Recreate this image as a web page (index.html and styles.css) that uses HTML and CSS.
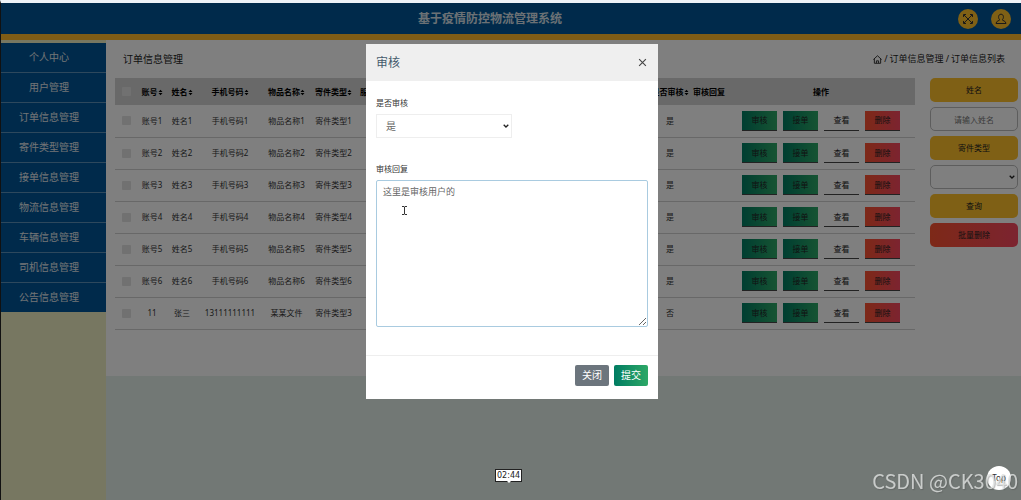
FILE: index.html
```html
<!DOCTYPE html>
<html lang="zh-CN">
<head>
<meta charset="utf-8">
<title>基于疫情防控物流管理系统</title>
<link rel="stylesheet" href="styles.css">
</head>
<body>
<svg class="defs" aria-hidden="true">
  <symbol id="sort" viewBox="0 0 6 8"><path d="M3 0.6 5.4 3.4H0.6zM3 7.4 0.6 4.6H5.4z" fill="currentColor"/></symbol>
</svg>
<header class="topbar">
  <h1 class="topbar-title">基于疫情防控物流管理系统</h1>
  <div class="topbar-actions">
    <button class="round" type="button" aria-label="全屏">
      <svg width="12" height="12" viewBox="0 0 12 12" fill="none" stroke="currentColor"><path d="M2 2l8 8M10 2l-8 8M1.500 4V1.500H4M8 1.500h2.500V4M10.500 8v2.500H8M4 10.500H1.500V8"/></svg>
    </button>
    <button class="round" type="button" aria-label="用户">
      <svg width="12" height="12" viewBox="0 0 12 12" fill="none" stroke="currentColor"><path d="M4.800 6.800C3 5.500 3 1.200 6 1.200s3 4.300 1.200 5.600c0 .9 3.600.8 3.800 3.700H1c.2-2.900 3.800-2.800 3.800-3.700z"/></svg>
    </button>
  </div>
</header>
<div class="layout">
  <nav class="sidebar">
    <ul class="menu">
      <li><a href="#">个人中心</a></li>
      <li><a href="#">用户管理</a></li>
      <li><a href="#">订单信息管理</a></li>
      <li><a href="#">寄件类型管理</a></li>
      <li><a href="#">接单信息管理</a></li>
      <li><a href="#">物流信息管理</a></li>
      <li><a href="#">车辆信息管理</a></li>
      <li><a href="#">司机信息管理</a></li>
      <li><a href="#">公告信息管理</a></li>
    </ul>
  </nav>
  <main class="content">
    <div class="page-head">
      <h2 class="page-title">订单信息管理</h2>
      <div class="crumbs">
        <svg width="9" height="9" viewBox="0 0 10 10" fill="none" stroke="currentColor"><path d="M.5 5 5 .8 9.500 5M1.500 4.200v5h7v-5M3.800 9V6.500h2.400V9"/></svg>
        <span>/</span><a href="#">订单信息管理</a><span>/</span><span>订单信息列表</span>
      </div>
    </div>
    <div class="columns">
      <table class="orders">
        <colgroup><col class="c-check"><col class="c-short"><col class="c-short"><col class="c-phone"><col class="c-name"><col class="c-name"><col><col class="c-state"><col class="c-reply"><col class="c-ops"></colgroup>
        <thead><tr>
          <th><input type="checkbox" aria-label="全选"></th>
          <th>账号<svg class="sort"><use href="#sort"/></svg></th>
          <th>姓名<svg class="sort"><use href="#sort"/></svg></th>
          <th>手机号码<svg class="sort"><use href="#sort"/></svg></th>
          <th>物品名称<svg class="sort"><use href="#sort"/></svg></th>
          <th>寄件类型<svg class="sort"><use href="#sort"/></svg></th>
          <th class="start">服务</th>
          <th>是否审核<svg class="sort"><use href="#sort"/></svg></th>
          <th>审核回复</th>
          <th>操作</th>
        </tr></thead>
        <tbody>
          <tr><td><input type="checkbox" aria-label="选择账号1"></td><td>账号1</td><td>姓名1</td><td>手机号码1</td><td>物品名称1</td><td>寄件类型1</td><td></td><td>是</td><td></td><td><div class="ops"><button class="op green">审核</button><button class="op green">接单</button><button class="op">查看</button><button class="op red">删除</button></div></td></tr>
          <tr><td><input type="checkbox" aria-label="选择账号2"></td><td>账号2</td><td>姓名2</td><td>手机号码2</td><td>物品名称2</td><td>寄件类型2</td><td></td><td>是</td><td></td><td><div class="ops"><button class="op green">审核</button><button class="op green">接单</button><button class="op">查看</button><button class="op red">删除</button></div></td></tr>
          <tr><td><input type="checkbox" aria-label="选择账号3"></td><td>账号3</td><td>姓名3</td><td>手机号码3</td><td>物品名称3</td><td>寄件类型3</td><td></td><td>是</td><td></td><td><div class="ops"><button class="op green">审核</button><button class="op green">接单</button><button class="op">查看</button><button class="op red">删除</button></div></td></tr>
          <tr><td><input type="checkbox" aria-label="选择账号4"></td><td>账号4</td><td>姓名4</td><td>手机号码4</td><td>物品名称4</td><td>寄件类型4</td><td></td><td>是</td><td></td><td><div class="ops"><button class="op green">审核</button><button class="op green">接单</button><button class="op">查看</button><button class="op red">删除</button></div></td></tr>
          <tr><td><input type="checkbox" aria-label="选择账号5"></td><td>账号5</td><td>姓名5</td><td>手机号码5</td><td>物品名称5</td><td>寄件类型5</td><td></td><td>是</td><td></td><td><div class="ops"><button class="op green">审核</button><button class="op green">接单</button><button class="op">查看</button><button class="op red">删除</button></div></td></tr>
          <tr><td><input type="checkbox" aria-label="选择账号6"></td><td>账号6</td><td>姓名6</td><td>手机号码6</td><td>物品名称6</td><td>寄件类型6</td><td></td><td>是</td><td></td><td><div class="ops"><button class="op green">审核</button><button class="op green">接单</button><button class="op">查看</button><button class="op red">删除</button></div></td></tr>
          <tr><td><input type="checkbox" aria-label="选择11"></td><td>11</td><td>张三</td><td>13111111111</td><td>某某文件</td><td>寄件类型3</td><td></td><td>否</td><td></td><td><div class="ops"><button class="op green">审核</button><button class="op green">接单</button><button class="op">查看</button><button class="op red">删除</button></div></td></tr>
        </tbody>
      </table>
      <form class="filters">
        <label class="pill" for="name">姓名</label>
        <input class="field" id="name" type="text" placeholder="请输入姓名">
        <label class="pill" for="type">寄件类型</label>
        <select class="field" id="type"><option></option></select>
        <button class="pill" type="button">查询</button>
        <button class="pill red" type="button">批量删除</button>
      </form>
    </div>
  </main>
</div>
<button class="to-top" type="button">Top</button>
<div class="backdrop">
  <section class="modal" role="dialog" aria-labelledby="dlg-title">
    <header class="modal-head">
      <h2 class="modal-title" id="dlg-title">审核</h2>
      <button class="close" type="button" aria-label="关闭">
        <svg width="9" height="9" viewBox="0 0 8 8" fill="none" stroke="currentColor"><path d="M1 1l6 6M7 1 1 7"/></svg>
      </button>
    </header>
    <div class="modal-body">
      <label for="passed">是否审核</label>
      <select class="passed" id="passed"><option>是</option></select>
      <label for="reply">审核回复</label>
      <textarea class="reply" id="reply">这里是审核用户的</textarea>
      <svg class="cursor" width="7" height="9" viewBox="0 0 7 9" fill="none" stroke="#333"><path d="M1 .5h2l.5.5.5-.5h2M3.500 1v7M1 8.500h2l.5-.5.5.5h2"/></svg>
    </div>
    <footer class="modal-foot">
      <button class="btn gray" type="button">关闭</button>
      <button class="btn green" type="button">提交</button>
    </footer>
  </section>
</div>
<div class="timestamp">02:44</div>
<div class="watermark">CSDN @CK3040</div>
</body>
</html>
```
FILE: styles.css
```css
* { box-sizing: border-box; }

body {
  margin: 0;
  min-height: 100vh;
  display: flex;
  flex-direction: column;
  border-top: 3px solid #eef3f8;
  border-left: 1px solid #222;
  background: #e4f0ea;
  color: #333;
  font: 8px/12px "Noto Sans", "Noto Sans CJK SC", sans-serif;
}

h1, h2, ul { margin: 0; padding: 0; }
ul { list-style: none; }
a { color: inherit; text-decoration: none; }
button, input, select, textarea { font: inherit; color: inherit; margin: 0; }
button { border: 0; padding: 0; }
.defs { display: none; }

.green { background: linear-gradient(90deg, #007c62, #2da866); }
.red { background: linear-gradient(90deg, #fb5230, #f84860); }
.gray { background: #6c757d; }

.topbar {
  display: grid;
  grid-template-columns: 1fr auto 1fr;
  align-items: center;
  height: 37px;
  padding-right: 10px;
  border-bottom: 6px solid #ffb92a;
  background: #005596;
}
.topbar-title {
  grid-column: 2;
  margin-right: 32px;
  color: #d8e2ea;
  font-size: 12px;
  line-height: 18px;
}
.topbar-actions { display: flex; justify-content: flex-end; gap: 13px; }
.round {
  display: flex;
  align-items: center;
  justify-content: center;
  width: 20px;
  height: 20px;
  border-radius: 50%;
  background: #ffc02a;
}

.layout { flex: 1; display: flex; align-items: stretch; }
.sidebar { width: 105px; padding-top: 3px; background: #eeefc2; }
.menu { background: #005596; }
.menu a {
  display: block;
  height: 30px;
  padding-right: 9px;
  border-bottom: 1px solid #5a90bb;
  color: #e4e8ec;
  font-size: 10px;
  line-height: 29px;
  text-align: center;
}
.menu li:last-child a { height: 29px; border-bottom: 0; }

.content {
  flex: 1;
  align-self: flex-start;
  padding: 0 3px 46px 9px;
  background: #fff;
}
.page-head {
  display: flex;
  align-items: center;
  justify-content: space-between;
  height: 38px;
  padding: 0 13px 0 8px;
}
.page-title { font-size: 10px; font-weight: 400; line-height: 16px; color: #222; }
.crumbs { display: flex; align-items: center; gap: 2px; font-size: 9px; color: #222; }
.columns { display: flex; align-items: flex-start; gap: 15px; }

.orders { flex: 1; width: 0; table-layout: fixed; border-collapse: collapse; }
.c-check { width: 22px; }
.c-short { width: 30px; }
.c-phone { width: 66px; }
.c-name { width: 47px; }
.c-state { width: 42px; }
.c-reply { width: 36px; }
.c-ops { width: 188px; }
.orders th, .orders td { padding: 0; text-align: center; white-space: nowrap; }
.orders th { height: 27px; background: #d2d2d2; color: #000; }
.orders th.start { padding-left: 3px; text-align: left; }
.orders td { height: 32px; border-bottom: 1px solid #d0d0d0; }
.orders input {
  display: block;
  appearance: none;
  width: 9px;
  height: 9px;
  margin-left: 7px;
  border-radius: 1px;
  background: #e2e2e2;
}
.sort { width: 5px; height: 7px; vertical-align: -1px; }
.ops { display: flex; justify-content: center; gap: 6px; }
.op {
  width: 35px;
  height: 20px;
  border-bottom: 1px solid #444;
  color: #222;
}
.op:not(.green):not(.red) { background: #fff; }

.filters { display: flex; flex-direction: column; gap: 5px; width: 88px; }
.pill, .field { width: 100%; height: 24px; border-radius: 5px; text-align: center; }
.pill { background-color: #ffc02a; color: #222; line-height: 24px; }
.pill.red { background: linear-gradient(90deg, #fb5230, #f84860); }
.field { border: 1px solid #bbb; background: #fff; }
.field::placeholder { color: #777; }
select.field, .passed {
  appearance: none;
  background: #fff url("data:image/svg+xml,%3Csvg xmlns='http://www.w3.org/2000/svg' width='6' height='4' fill='none' stroke='%23222' stroke-width='1.3'%3E%3Cpath d='M.7.7 3 3 5.300.7'/%3E%3C/svg%3E") no-repeat right 2px center;
}

.to-top {
  position: fixed;
  right: 10px;
  bottom: 10px;
  z-index: 3;
  width: 24px;
  height: 24px;
  border-radius: 50%;
  background: #fff;
}

.backdrop {
  position: fixed;
  inset: 3px 0 0 3px;
  z-index: 2;
  display: flex;
  align-items: flex-start;
  justify-content: center;
  padding-top: 41px;
  box-shadow: -3px 0 0 rgba(0, 0, 0, .5);
  background: rgba(0, 0, 0, .5);
}
.modal { width: 292px; background: #fff; }
.modal-head {
  display: flex;
  align-items: center;
  justify-content: space-between;
  height: 37px;
  padding: 0 11px 0 10px;
  background: #efefef;
}
.modal-title { color: #455a6c; font-size: 12px; font-weight: 400; line-height: 18px; }
.close { display: flex; background: none; color: #444; }
.modal-body {
  position: relative;
  display: flex;
  flex-direction: column;
  align-items: flex-start;
  padding: 16px 10px 28px;
}
.passed {
  width: 136px;
  height: 24px;
  margin: 5px 0 25px;
  padding: 0 0 0 9px;
  border: 1px solid #eee;
  color: #666;
  font-size: 10px;
}
.reply {
  width: 100%;
  height: 147px;
  margin-top: 5px;
  padding: 4px 6px;
  border: 1px solid #a9cbe0;
  border-radius: 2px;
  outline: 0;
  color: #666;
  font-size: 9px;
  line-height: 14px;
}
.cursor { position: absolute; left: 35px; top: 125px; }
.modal-foot {
  display: flex;
  justify-content: flex-end;
  gap: 5px;
  padding: 9px 10px 13px;
  border-top: 1px solid #eee;
}
.btn {
  height: 21px;
  padding: 0 7px;
  border-radius: 2px;
  color: #fff;
  font-size: 10px;
  line-height: 21px;
}

.timestamp {
  position: fixed;
  left: 495px;
  bottom: 18px;
  z-index: 4;
  padding: 0 1px;
  border: 1px solid #222;
  background: #fff;
  color: #222;
  font: 8px/11px "DejaVu Sans", sans-serif;
}
.timestamp::after {
  content: "";
  position: absolute;
  top: 100%;
  left: 50%;
  margin-left: -2px;
  border: 2px solid transparent;
  border-top-color: #fff;
}
.watermark {
  position: fixed;
  right: 3px;
  bottom: 5px;
  z-index: 4;
  color: rgba(225, 228, 226, .8);
  font: 20px/28px "Noto Sans CJK SC", sans-serif;
  text-shadow: 1px 1px 1px rgba(80, 80, 80, .4);
}
```
